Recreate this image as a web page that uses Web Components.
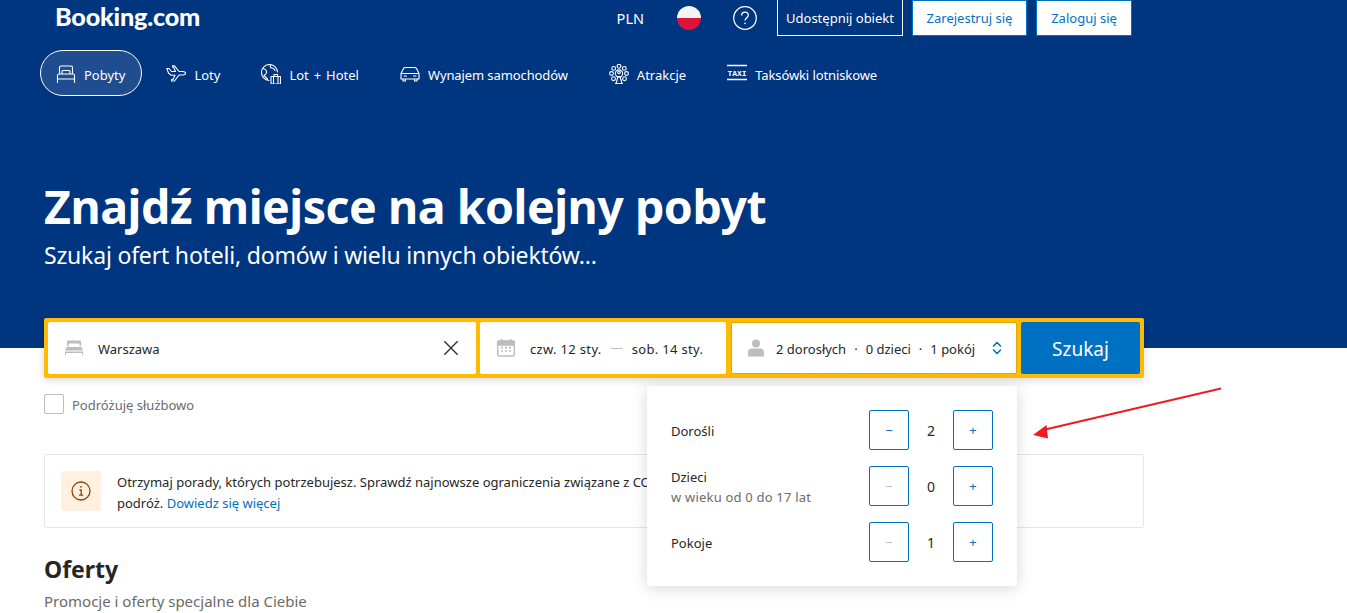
<!DOCTYPE html>
<html lang="pl">
<head>
<meta charset="utf-8">
<title>Booking.com</title>
<style>
    html, body { margin: 0; padding: 0; height: 613px; overflow: hidden; background: #fff; }
    body { font-family: "Noto Sans", "Open Sans", sans-serif; position: relative; }
</style>
</head>
<body>
<bk-hero>
    <bk-topbar slot="top"></bk-topbar>
    <bk-nav slot="nav">
        <bk-nav-item icon="bed" active>Pobyty</bk-nav-item>
        <bk-nav-item icon="plane">Loty</bk-nav-item>
        <bk-nav-item icon="globe" style="word-spacing:1.5px">Lot + Hotel</bk-nav-item>
        <bk-nav-item icon="car" style="letter-spacing:-.1px">Wynajem samochodów</bk-nav-item>
        <bk-nav-item icon="wheel">Atrakcje</bk-nav-item>
        <bk-nav-item icon="taxi" style="letter-spacing:-.1px">Taksówki lotniskowe</bk-nav-item>
    </bk-nav>
    <span slot="title">Znajdź miejsce na kolejny pobyt</span>
    <span slot="subtitle">Szukaj ofert hoteli, domów i wielu innych obiektów...</span>
</bk-hero>
<bk-content>
    <bk-searchbar></bk-searchbar>
    <bk-checkbox>Podróżuję służbowo</bk-checkbox>
    <bk-notice>Otrzymaj porady, których potrzebujesz. Sprawdź najnowsze ograniczenia związane z COVID-19 przed rezerwacją i zaplanuj swoją<br>podróż. <a href="#">Dowiedz się więcej</a></bk-notice>
    <bk-section title="Oferty">Promocje i oferty specjalne dla Ciebie</bk-section>
</bk-content>
<bk-guests></bk-guests>
<bk-arrow></bk-arrow>

<script>
// Line icons used in the nav and the search bar
const ICONS = {
    bed: '<path d="M1.500 18.500V11.500Q1.500 10 3 10H17Q18.500 10 18.500 11.500V18.500M1.500 15H18.500M3.500 10V3.500Q3.500 2 5 2H15Q16.500 2 16.500 3.500V10M6 10V7.500Q6 6.500 7 6.500H13Q14 6.500 14 7.500V10"/>',
    plane: '<path d="M.8 4.500H3L5.500 7.500H9.500L7.500 3H6.500V1.800H8.500L13 7.500H17Q19.600 7.800 19.600 9.300Q19.600 10.800 17 11H13L8.500 17H5.500V15.500H7L9 11.200H5L2.500 9Z"/>',
    globe: '<path d="M8 16.500A8 8 0 1 1 16.500 8M2 4.500Q5 5 5.500 7.500T3 11.500L6.500 15M9.500 .7Q8.500 3.500 11 4T14 6.500M10 12.500H19.500V20H10ZM13 12.500V10.500H16.500V12.500M12.500 12.500V20M17 12.500V20"/>',
    car: '<path d="M1 9.500L3.500 4.500Q4 3.500 5.500 3.500H14.500Q16 3.500 16.500 4.500L19 9.500V15H1ZM1 9.500H19M3 15V17H5.500V15M14.500 15V17H17V15M4 12H6.500M13.500 12H16"/>',
    wheel: '<circle cx="10" cy="9.500" r="3.600"/><circle cx="10" cy="8.300" r="1.300"/><path d="M7 19.500L9 12.500M13 19.500L11 12.500M6.500 19.500H13.500M8.500 12.500H11.500"/><circle cx="10" cy="2.300" r="1.900"/><circle cx="4.700" cy="4.400" r="1.900"/><circle cx="15.300" cy="4.400" r="1.900"/><circle cx="2.500" cy="9.500" r="1.900"/><circle cx="17.500" cy="9.500" r="1.900"/><circle cx="4.500" cy="14.700" r="1.900"/><circle cx="15.500" cy="14.700" r="1.900"/>',
    taxi: '<path d="M0 1.500H20M0 15.500H20" stroke-width="1.400"/><text x="10" y="11.500" text-anchor="middle" font-family="Liberation Mono, monospace" font-weight="700" font-size="8" fill="currentColor" stroke="none">TAXI</text>'
};

function svgIcon(name) {
    return `<svg width="20" height="20" viewBox="0 0 20 20" fill="none" stroke="currentColor" stroke-width="1.100" stroke-linejoin="round" stroke-linecap="round">${ICONS[name]}</svg>`;
}

class BkHero extends HTMLElement {
    constructor() {
        super();
        this.attachShadow({ mode: 'open' }).innerHTML = `
            <style>
                :host { display: block; height: 348px; background: #003580; color: #fff; box-sizing: border-box; }
                .title { font-size: 46.5px; font-weight: 700; line-height: 60px; margin: 80px 0 0 44px; letter-spacing: -.49px; }
                .subtitle { font-size: 23px; line-height: 32px; margin: 3px 0 0 44px; letter-spacing: -.19px; }
            </style>
            <slot name="top"></slot>
            <slot name="nav"></slot>
            <div class="title"><slot name="title"></slot></div>
            <div class="subtitle"><slot name="subtitle"></slot></div>
        `;
    }
}

class BkTopbar extends HTMLElement {
    constructor() {
        super();
        this.attachShadow({ mode: 'open' }).innerHTML = `
            <style>
                :host { display: flex; align-items: flex-start; height: 36px; padding: 0 215px 0 55px; font-size: 13px; }
                .logo { font-family: "Lato", sans-serif; font-weight: 900; font-size: 25.2px; line-height: 32px; letter-spacing: -.2px; }
                .right { display: flex; align-items: center; margin-left: auto; height: 36px; }
                .cur { font-size: 14.500px; margin-right: 33px; }
                .flag { width: 24px; height: 24px; border-radius: 50%; margin-right: 32px;
                    background: linear-gradient(#f4f4f4 50%, #dc143c 50%); }
                .help { display: block; margin-right: 20px; }
                .btn { box-sizing: border-box; height: 36px; display: flex; align-items: center; justify-content: center;
                    border: 1px solid #0071c2; background: #fff; color: #0071c2; margin-left: 9px; }
                .btn.ghost { border: 1px solid #fff; border-top: 0; background: transparent; color: #fff; margin-left: 0; width: 126px; }
            </style>
            <div class="logo">Booking.com</div>
            <div class="right">
                <span class="cur">PLN</span>
                <span class="flag"></span>
                <svg class="help" width="24" height="24" viewBox="0 0 24 24" fill="none" stroke="#fff" stroke-width="1.200">
                    <circle cx="12" cy="12" r="11.300"/>
                    <path d="M8.600 9.400C8.600 7.300 10.200 6.200 12 6.200S15.300 7.400 15.300 9.200C15.300 11.600 12 11.800 12 14.600" stroke-width="1.300"/>
                    <circle cx="12" cy="17.400" r=".8" fill="#fff" stroke="none"/>
                </svg>
                <div class="btn ghost">Udostępnij obiekt</div>
                <div class="btn" style="width:115px">Zarejestruj się</div>
                <div class="btn" style="width:96px">Zaloguj się</div>
            </div>
        `;
    }
}

class BkNav extends HTMLElement {
    constructor() {
        super();
        this.attachShadow({ mode: 'open' }).innerHTML = `
            <style>
                :host { display: flex; gap: 8px; padding-left: 40px; margin-top: 14px; }
            </style>
            <slot></slot>
        `;
    }
}

class BkNavItem extends HTMLElement {
    constructor() {
        super();
        this.attachShadow({ mode: 'open' }).innerHTML = `
            <style>
                :host { display: flex; align-items: center; gap: 8px; box-sizing: border-box; height: 46px; padding: 0 16px 0 15px;
                    border: 1px solid transparent; border-radius: 23px; font-size: 13px; color: #fff; }
                :host([active]) { border-color: #fff; background: rgba(255,255,255,.12); }
                svg { display: block; flex: none; margin-top: 2px; }
                .t { padding-top: 4px; }
            </style>
            ${svgIcon(this.getAttribute('icon'))}
            <span class="t"><slot></slot></span>
        `;
    }
}

class BkSearchbar extends HTMLElement {
    constructor() {
        super();
        this.attachShadow({ mode: 'open' }).innerHTML = `
            <style>
                :host { display: flex; gap: 4px; box-sizing: border-box; width: 1100px; height: 60px; padding: 4px; background: #febb02;
                    border-radius: 2px; box-shadow: 0 2px 8px rgba(0,0,0,.16); font-size: 13px; color: #262626; }
                .box { display: flex; align-items: center; background: #fff; border-radius: 2px; box-sizing: border-box; flex: none; }
                .box span { padding-top: 2px; }
                .dest { width: 428px; padding: 0 15px 0 16px; }
                .dest .x { margin-left: auto; display: block; }
                .dates { width: 246px; padding: 0 0 0 16px; letter-spacing: .33px; }
                .guests { width: 286px; padding: 0 13px 0 14px; margin-left: 1px; border: 1px solid #e0a800; }
                .ico { color: #bdbdbd; margin-right: 14px; display: block; flex: none; }
                .box .sep { width: 12px; height: 1px; padding: 0; background: #bdbdbd; margin: 0 9px; }
                .dot { margin: 0 8px; }
                .chev { margin-left: auto; display: block; }
                .go { width: 119px; background: #0071c2; color: #fff; font-size: 19px; justify-content: center; }
            </style>
            <div class="box dest">
                <svg class="ico" width="20" height="20" viewBox="0 0 20 20" fill="#bdbdbd">
                    <path d="M3 3.500Q3 2.500 4 2.500H16Q17 2.500 17 3.500V8H15.500V6.500Q15.500 5.500 14.500 5.500H5.500Q4.500 5.500 4.500 6.500V8H3Z"/>
                    <path d="M2.500 9H17.500L19 12.500H1Z"/><path d="M1 13.500H19V17H18V15H2V17H1Z"/>
                </svg>
                <span>Warszawa</span>
                <svg class="x" width="20" height="20" viewBox="0 0 20 20" fill="none" stroke="#333" stroke-width="1.400"><path d="M3.300 3.300L16.700 16.700M16.700 3.300L3.300 16.700"/></svg>
            </div>
            <div class="box dates">
                <svg class="ico" width="20" height="20" viewBox="0 0 20 20" fill="none" stroke="#bdbdbd" stroke-width="1.500">
                    <rect x="1.700" y="3" width="16.600" height="15" rx="1.500"/>
                    <path d="M1.700 3.500H18.300V7H1.700Z" fill="#bdbdbd"/>
                    <path d="M5.500 1V4M14.500 1V4"/>
                    <path d="M5 9.700H7M9 9.700H11M13 9.700H15M5 13H7M9 13H11M13 13H15" stroke-width="1.700"/>
                </svg>
                <span>czw. 12 sty.</span><span class="sep"></span><span>sob. 14 sty.</span>
            </div>
            <div class="box guests">
                <svg class="ico" width="20" height="20" viewBox="0 0 20 20" fill="#bdbdbd" style="margin-right:10px">
                    <circle cx="10" cy="5.500" r="4"/>
                    <path d="M2 18.500V14.500Q2 10.500 6 10.500H14Q18 10.500 18 14.500V18.500Z"/>
                </svg>
                <span>2 dorosłych</span><span class="dot">·</span><span>0 dzieci</span><span class="dot">·</span><span>1 pokój</span>
                <svg class="chev" width="12" height="16" viewBox="0 0 12 16" fill="none" stroke="#0071c2" stroke-width="1.600" stroke-linecap="round" stroke-linejoin="round">
                    <path d="M2.500 6L6 2.500L9.500 6M2.500 10L6 13.500L9.500 10"/>
                </svg>
            </div>
            <div class="box go"><span>Szukaj</span></div>
        `;
    }
}

class BkContent extends HTMLElement {
    constructor() {
        super();
        this.attachShadow({ mode: 'open' }).innerHTML = `
            <style>
                :host { display: block; width: 1100px; margin: -30px 0 0 44px; position: relative; }
            </style>
            <slot></slot>
        `;
    }
}

class BkCheckbox extends HTMLElement {
    constructor() {
        super();
        this.attachShadow({ mode: 'open' }).innerHTML = `
            <style>
                :host { display: flex; align-items: center; gap: 8px; margin-top: 16px; height: 20px; font-size: 13px; color: #6b6b6b; }
                .box { box-sizing: border-box; width: 20px; height: 20px; border: 1px solid #bdbdbd; border-radius: 2px; background: #fff; }
                .t { padding-top: 2px; }
            </style>
            <span class="box"></span><span class="t"><slot></slot></span>
        `;
    }
}

class BkNotice extends HTMLElement {
    constructor() {
        super();
        this.attachShadow({ mode: 'open' }).innerHTML = `
            <style>
                :host { display: flex; align-items: center; box-sizing: border-box; height: 74px; margin-top: 40px; padding: 0 16px;
                    border: 1px solid #e6e6e6; border-radius: 2px; font-size: 13px; line-height: 21px; color: #262626; white-space: nowrap; }
                .ico { width: 40px; height: 40px; border-radius: 2px; background: #fff0e0; display: flex; align-items: center;
                    justify-content: center; margin-right: 16px; flex: none; }
                .t { padding-top: 4px; }
                ::slotted(a) { color: #0071c2; text-decoration: none; }
            </style>
            <span class="ico">
                <svg width="20" height="20" viewBox="0 0 20 20" fill="none" stroke="#923e01" stroke-width="1.300">
                    <circle cx="10" cy="10" r="9"/>
                    <path d="M8.800 8.800H10.200V14.200M8.500 14.200H11.700" stroke-linecap="round"/>
                    <circle cx="10" cy="5.800" r=".9" fill="#923e01" stroke="none"/>
                </svg>
            </span>
            <div class="t"><slot></slot></div>
        `;
    }
}

class BkSection extends HTMLElement {
    constructor() {
        super();
        this.attachShadow({ mode: 'open' }).innerHTML = `
            <style>
                :host { display: block; margin-top: 24px; }
                h2 { margin: 0; font-size: 23px; line-height: 34px; font-weight: 700; color: #262626; }
                div { font-size: 15px; line-height: 24px; color: #6b6b6b; margin-top: 3px; }
            </style>
            <h2>${this.getAttribute('title')}</h2>
            <div><slot></slot></div>
        `;
    }
}

class BkStepper extends HTMLElement {
    constructor() {
        super();
        const minOff = this.getAttribute('value') === this.getAttribute('min');
        this.attachShadow({ mode: 'open' }).innerHTML = `
            <style>
                :host { display: flex; align-items: center; font-size: 13px; color: #262626; margin-left: auto; }
                button { box-sizing: border-box; width: 40px; height: 40px; padding: 0; background: #fff; border: 1px solid #0071c2;
                    border-radius: 2px; color: #0071c2; font: inherit; display: flex; align-items: center; justify-content: center; }
                button.off { color: #bdbdbd; }
                span { width: 44px; text-align: center; font-size: 14px; }
            </style>
            <button class="${minOff ? 'off' : ''}">−</button>
            <span>${this.getAttribute('value')}</span>
            <button>+</button>
        `;
    }
}

class BkGuests extends HTMLElement {
    constructor() {
        super();
        this.attachShadow({ mode: 'open' }).innerHTML = `
            <style>
                :host { position: absolute; left: 647px; top: 386px; width: 370px; height: 200px; box-sizing: border-box; padding: 24px;
                    display: flex; flex-direction: column; gap: 16px; background: #fff; border-radius: 2px;
                    box-shadow: 0 2px 16px rgba(0,0,0,.16); font-size: 13px; color: #262626; }
                .row { display: flex; align-items: center; height: 40px; }
                .label { padding-top: 2px; }
                .kids { padding-top: 1px; }
                small { display: block; font-size: 13px; letter-spacing: .2px; color: #6b6b6b; margin-top: 2px; }
            </style>
            <div class="row"><div class="label">Dorośli</div><bk-stepper value="2" min="1"></bk-stepper></div>
            <div class="row"><div class="kids">Dzieci<small>w wieku od 0 do 17 lat</small></div><bk-stepper value="0" min="0"></bk-stepper></div>
            <div class="row"><div class="label">Pokoje</div><bk-stepper value="1" min="1"></bk-stepper></div>
        `;
    }
}

// Red annotation drawn on top of the screenshot
class BkArrow extends HTMLElement {
    constructor() {
        super();
        this.attachShadow({ mode: 'open' }).innerHTML = `
            <style>
                :host { position: absolute; left: 1025px; top: 380px; width: 205px; height: 65px; }
                svg { display: block; }
            </style>
            <svg width="205" height="65" viewBox="0 0 205 65">
                <path d="M196 8.500L18 50" stroke="#ed1c24" stroke-width="1.800" fill="none"/>
                <path d="M8 55L21.500 45L23 58.500Z" fill="#ed1c24"/>
            </svg>
        `;
    }
}

customElements.define('bk-hero', BkHero);
customElements.define('bk-topbar', BkTopbar);
customElements.define('bk-nav', BkNav);
customElements.define('bk-nav-item', BkNavItem);
customElements.define('bk-searchbar', BkSearchbar);
customElements.define('bk-content', BkContent);
customElements.define('bk-checkbox', BkCheckbox);
customElements.define('bk-notice', BkNotice);
customElements.define('bk-section', BkSection);
customElements.define('bk-stepper', BkStepper);
customElements.define('bk-guests', BkGuests);
customElements.define('bk-arrow', BkArrow);
</script>
</body>
</html>
